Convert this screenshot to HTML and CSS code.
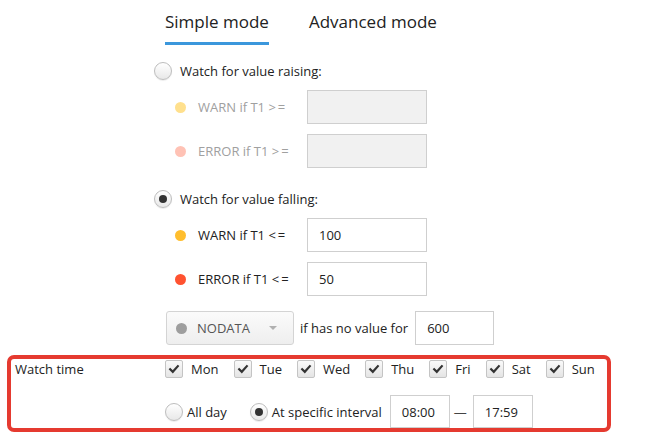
FILE: index.html
```html
<!DOCTYPE html>
<html>
<head>
<meta charset="utf-8">
<link rel="stylesheet" href="styles.css">
</head>
<body>
<div class="tabs">
  <div class="tab active">Simple mode</div>
  <div class="tab">Advanced mode</div>
</div>
<div class="form">
  <label class="radio-row first">
    <span class="radio"></span>
    <span class="rtext">Watch for value raising:</span>
  </label>
  <div class="sub disabled r1">
    <span class="dot warn-off"></span>
    <span class="slabel">WARN if T1 <span class="op">&gt;=</span></span>
    <span class="input off"></span>
  </div>
  <div class="sub disabled r2">
    <span class="dot err-off"></span>
    <span class="slabel">ERROR if T1 <span class="op">&gt;=</span></span>
    <span class="input off"></span>
  </div>
  <label class="radio-row second">
    <span class="radio checked"></span>
    <span class="rtext">Watch for value falling:</span>
  </label>
  <div class="sub r1">
    <span class="dot warn"></span>
    <span class="slabel">WARN if T1 <span class="op">&lt;=</span></span>
    <span class="input">100</span>
  </div>
  <div class="sub r2">
    <span class="dot err"></span>
    <span class="slabel">ERROR if T1 <span class="op">&lt;=</span></span>
    <span class="input">50</span>
  </div>
  <div class="nodata-row">
    <div class="select">
      <span class="dot gray"></span>
      <span class="sel-text">NODATA</span>
      <span class="caret"></span>
    </div>
    <span class="nlabel">if has no value for</span>
    <span class="input small">600</span>
  </div>
</div>
<div class="watch">
  <div class="wrow">
    <div class="wlabel">Watch time</div>
    <div class="days">
      <label class="day"><span class="cb"><svg viewBox="0 0 18 18" width="18" height="18"><path d="M5.2 9.2 L7.8 11.8 L12.8 6.2" fill="none" stroke="#333" stroke-width="2.2" stroke-linecap="square"/></svg></span>Mon</label>
      <label class="day"><span class="cb"><svg viewBox="0 0 18 18" width="18" height="18"><path d="M5.2 9.2 L7.8 11.8 L12.8 6.2" fill="none" stroke="#333" stroke-width="2.2" stroke-linecap="square"/></svg></span>Tue</label>
      <label class="day"><span class="cb"><svg viewBox="0 0 18 18" width="18" height="18"><path d="M5.2 9.2 L7.8 11.8 L12.8 6.2" fill="none" stroke="#333" stroke-width="2.2" stroke-linecap="square"/></svg></span>Wed</label>
      <label class="day"><span class="cb"><svg viewBox="0 0 18 18" width="18" height="18"><path d="M5.2 9.2 L7.8 11.8 L12.8 6.2" fill="none" stroke="#333" stroke-width="2.2" stroke-linecap="square"/></svg></span>Thu</label>
      <label class="day"><span class="cb"><svg viewBox="0 0 18 18" width="18" height="18"><path d="M5.2 9.2 L7.8 11.8 L12.8 6.2" fill="none" stroke="#333" stroke-width="2.2" stroke-linecap="square"/></svg></span>Fri</label>
      <label class="day"><span class="cb"><svg viewBox="0 0 18 18" width="18" height="18"><path d="M5.2 9.2 L7.8 11.8 L12.8 6.2" fill="none" stroke="#333" stroke-width="2.2" stroke-linecap="square"/></svg></span>Sat</label>
      <label class="day"><span class="cb"><svg viewBox="0 0 18 18" width="18" height="18"><path d="M5.2 9.2 L7.8 11.8 L12.8 6.2" fill="none" stroke="#333" stroke-width="2.2" stroke-linecap="square"/></svg></span>Sun</label>
    </div>
  </div>
  <div class="wrow2">
    <label class="opt"><span class="radio"></span>All day</label>
    <label class="opt second-opt"><span class="radio checked"></span>At specific interval</label>
    <span class="input time first-time">08:00</span>
    <span class="dash">—</span>
    <span class="input time">17:59</span>
  </div>
</div>
</body>
</html>
```
FILE: styles.css
```css
* { box-sizing: border-box; }
html, body {
  margin: 0;
  padding: 0;
  background: #fff;
}
body {
  width: 651px;
  height: 435px;
  overflow: hidden;
  font-family: "Open Sans", "Noto Sans", sans-serif;
  font-size: 13px;
  color: #222;
}
.tabs {
  display: flex;
  gap: 40px;
  padding-left: 165px;
  height: 45px;
}
.tab {
  font-size: 17px;
  line-height: 24px;
  padding-top: 10px;
  height: 45px;
  color: #222;
}
.tab.active {
  border-bottom: 3px solid #3b97dc;
}
.form {
  padding-left: 154px;
}
.radio-row {
  display: flex;
  align-items: center;
  height: 20px;
  gap: 8px;
}
.radio-row.first { margin-top: 16px; }
.radio-row.second { margin-top: 21px; }
.radio {
  flex: none;
  width: 18px;
  height: 18px;
  border-radius: 50%;
  border: 1px solid #bdbdbd;
  background: linear-gradient(#ffffff, #e8e8e8);
  box-shadow: 0 1px 1px rgba(0,0,0,0.08);
  display: inline-flex;
  align-items: center;
  justify-content: center;
}
.radio.checked::after {
  content: "";
  width: 8px;
  height: 8px;
  border-radius: 50%;
  background: #333;
}
.sub {
  display: flex;
  align-items: center;
  height: 34px;
  padding-left: 21px;
}
.sub.r1 { margin-top: 9px; }
.sub.r2 { margin-top: 10px; }
.dot {
  flex: none;
  width: 11px;
  height: 11px;
  border-radius: 50%;
}
.warn { background: #ffbe2e; }
.err { background: #ff5230; }
.warn-off { background: #ffe08d; }
.err-off { background: #ffc2b5; }
.gray { background: #9e9e9e; }
.slabel {
  width: 109px;
  margin-left: 12px;
}
.op { letter-spacing: 2px; }
.disabled .slabel { color: #a0a0a0; }
.input {
  display: inline-flex;
  align-items: center;
  width: 120px;
  height: 34px;
  border: 1px solid #cfcfcf;
  background: #fff;
  padding-left: 11px;
  color: #222;
}
.input.off {
  background: #f1f1f1;
}
.nodata-row {
  display: flex;
  align-items: center;
  height: 34px;
  margin-top: 15px;
  padding-left: 12px;
}
.select {
  display: flex;
  align-items: center;
  width: 128px;
  height: 34px;
  border: 1px solid #d4d4d4;
  border-radius: 3px;
  background: linear-gradient(#fbfbfb, #eeeeee);
  padding-left: 9px;
}
.sel-text {
  margin-left: 10px;
  color: #555;
  flex: 1;
}
.caret {
  width: 0;
  height: 0;
  border-left: 4px solid transparent;
  border-right: 4px solid transparent;
  border-top: 4px solid #b0b0b0;
  margin-right: 16px;
}
.nlabel {
  margin-left: 6px;
  margin-right: 7px;
}
.input.small { width: 79px; }
.watch {
  margin: 10px 0 0 7px;
  width: 604px;
  height: 77px;
  border: 4px solid #e53a30;
  border-radius: 7px;
  padding-left: 4px;
}
.wrow {
  display: flex;
  align-items: center;
  height: 20px;
}
.wlabel { width: 150px; }
.days {
  display: flex;
  gap: 15px;
}
.day {
  display: flex;
  align-items: center;
  gap: 8px;
}
.cb {
  width: 18px;
  height: 18px;
  border: 1px solid #c4c4c4;
  border-radius: 2px;
  background: linear-gradient(#fafafa, #e4e4e4);
  display: inline-flex;
  align-items: center;
  justify-content: center;
}
.cb svg { display: block; margin: -1px; }
.wrow2 {
  display: flex;
  align-items: center;
  height: 33px;
  margin-top: 16px;
  padding-left: 150px;
}
.opt {
  display: flex;
  align-items: center;
  gap: 4px;
}
.second-opt { margin-left: 23px; }
.input.time {
  width: 60px;
  height: 33px;
}
.input.first-time { margin-left: 8px; }
.dash {
  margin: 0 6px 0 4px;
  color: #444;
}
```
